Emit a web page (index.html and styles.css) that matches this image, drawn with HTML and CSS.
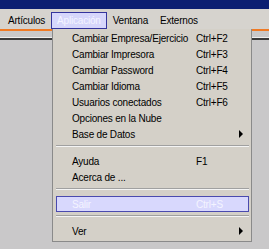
FILE: index.html
```html
<!DOCTYPE html>
<html lang="es">
<head>
    <meta charset="UTF-8">
    <title>Aplicación</title>
    <link rel="stylesheet" href="styles.css">
</head>
<body>
    <div class="titlebar"></div>

    <div class="menubar">
        <span class="menubar-item">Artículos</span>
        <span class="menubar-item active">Aplicación</span>
        <span class="menubar-item">Ventana</span>
        <span class="menubar-item">Externos</span>
    </div>

    <div class="workspace">
        <div class="rule-orange"></div>
        <div class="rule-dark"></div>

        <div class="dropdown">
            <div class="item"><span class="label">Cambiar Empresa/Ejercicio</span><span class="key">Ctrl+F2</span></div>
            <div class="item"><span class="label">Cambiar Impresora</span><span class="key">Ctrl+F3</span></div>
            <div class="item"><span class="label">Cambiar Password</span><span class="key">Ctrl+F4</span></div>
            <div class="item"><span class="label">Cambiar Idioma</span><span class="key">Ctrl+F5</span></div>
            <div class="item"><span class="label">Usuarios conectados</span><span class="key">Ctrl+F6</span></div>
            <div class="item"><span class="label">Opciones en la Nube</span><span class="key"></span></div>
            <div class="item"><span class="label">Base de Datos</span><span class="key"></span><span class="arrow"></span></div>
            <div class="separator"></div>
            <div class="item"><span class="label">Ayuda</span><span class="key">F1</span></div>
            <div class="item"><span class="label">Acerca de ...</span><span class="key"></span></div>
            <div class="separator"></div>
            <div class="item selected"><span class="label">Salir</span><span class="key">Ctrl+S</span></div>
            <div class="separator"></div>
            <div class="item"><span class="label">Ver</span><span class="key"></span><span class="arrow"></span></div>
        </div>
    </div>
</body>
</html>
```

FILE: styles.css
```css
body {
    margin: 0;
    width: 269px;
    height: 249px;
    overflow: hidden;
    background-color: #c9c8c9;
    font-family: 'Liberation Sans', Arial, sans-serif;
    font-size: 10px;
    letter-spacing: -0.2px;
    color: #000;
}

.titlebar {
    height: 9px;
    background-color: #0c1f72;
}

.menubar {
    display: flex;
    height: 20px;
    padding: 3px 0 0 2px;
    box-sizing: border-box;
    background-color: #d6d3ce;
}

.menubar-item {
    height: 17px;
    line-height: 15px;
    padding: 0 5px;
    border: 1px solid transparent;
    box-sizing: border-box;
    white-space: nowrap;
}

.menubar-item.active {
    background-color: #d6d6fb;
    border-color: #34349c;
    color: #f4f4ff;
}

.workspace {
    position: relative;
    height: 220px;
}

.rule-orange {
    height: 2px;
    background-color: #f07a24;
}

.rule-dark {
    height: 2px;
    margin-top: 6px;
    border-top: 1px solid #eeeeee;
    background-color: #3a3a3a;
}

.dropdown {
    position: absolute;
    left: 52px;
    top: 0;
    width: 200px;
    padding: 1px 2px 2px 3px;
    box-sizing: border-box;
    background-color: #d4d0c8;
    border: 1px solid #8a8a8a;
    border-top: none;
}

.item {
    display: flex;
    align-items: center;
    height: 16px;
    padding-left: 15px;
    border: 1px solid transparent;
    box-sizing: border-box;
    white-space: nowrap;
}

.item .label {
    width: 124px;
}

.item .key {
    flex: 1;
}

.item.selected {
    background-color: #d8d8fd;
    border-color: #4a4aae;
    color: #f4f4ff;
}

.arrow {
    width: 0;
    height: 0;
    margin-right: 5px;
    border-top: 4px solid transparent;
    border-bottom: 4px solid transparent;
    border-left: 4px solid #000;
}

.separator {
    height: 8px;
}

.separator::before {
    content: "";
    display: block;
    margin-top: 3px;
    height: 1px;
    background-color: #a0a0a0;
    border-bottom: 1px solid #f4f4f4;
}
```
